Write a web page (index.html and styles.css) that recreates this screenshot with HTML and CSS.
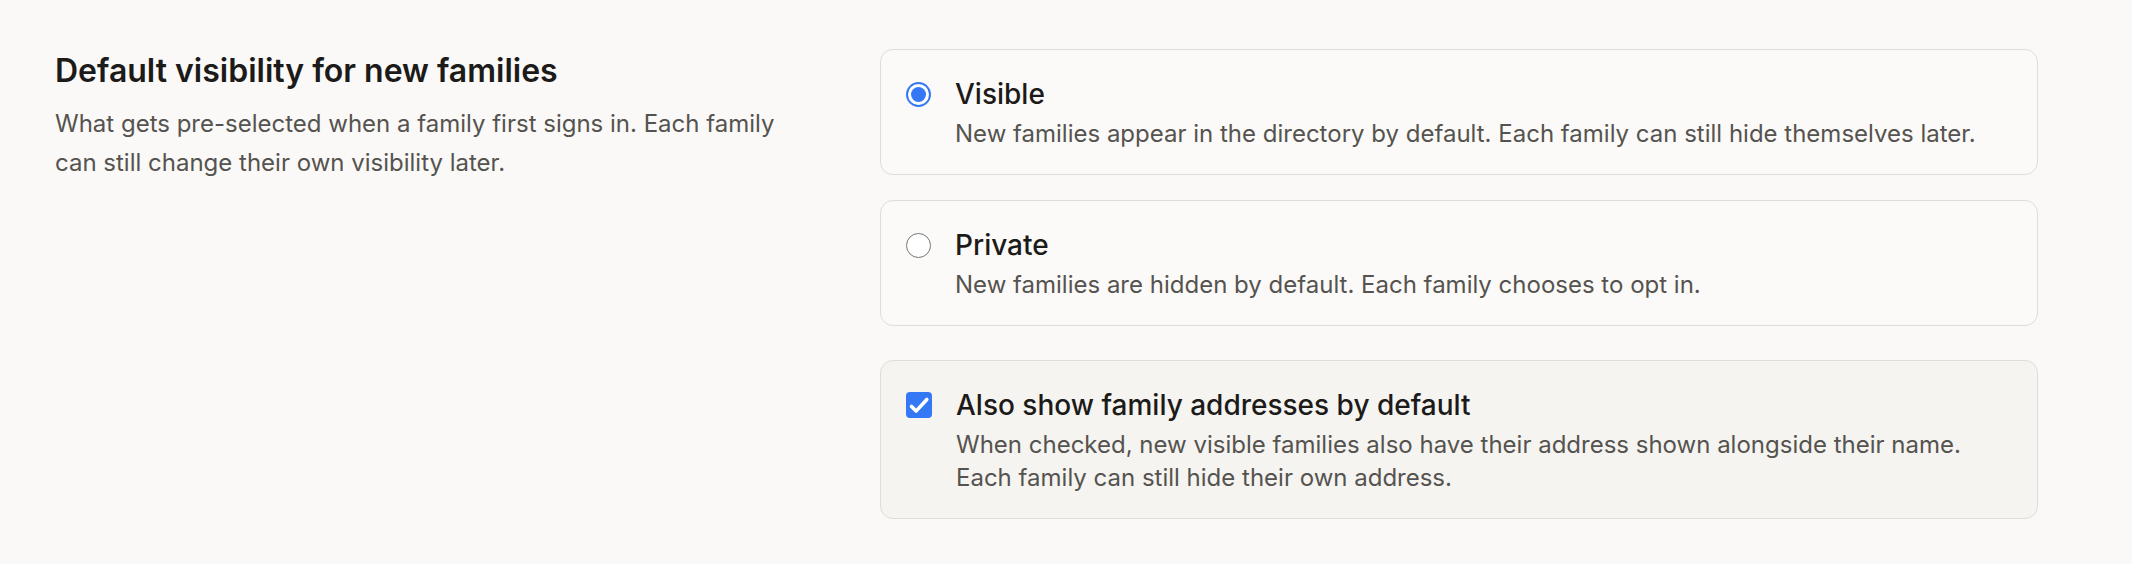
FILE: index.html
```html
<!DOCTYPE html>
<html lang="en">
<head>
<meta charset="utf-8">
<title>Directory settings</title>
<link rel="stylesheet" href="styles.css">
</head>
<body>
<section class="setting">
  <div class="setting-info">
    <h2 class="setting-title">Default visibility for new families</h2>
    <p class="setting-desc">What gets pre-selected when a family first signs in. Each family can still change their own visibility later.</p>
  </div>
  <div class="setting-controls">
    <div class="option-group">
      <label class="option">
        <span class="radio radio-checked"><span class="radio-dot"></span></span>
        <span class="option-text">
          <span class="option-label">Visible</span>
          <span class="option-hint">New families appear in the directory by default. Each family can still hide themselves later.</span>
        </span>
      </label>
      <label class="option">
        <span class="radio"></span>
        <span class="option-text">
          <span class="option-label">Private</span>
          <span class="option-hint">New families are hidden by default. Each family chooses to opt in.</span>
        </span>
      </label>
    </div>
    <label class="option option-muted">
      <span class="checkbox">
        <svg viewBox="0 0 26 26" width="26" height="26" aria-hidden="true"><path d="M5.5 14.5l4.6 4.6L20.8 7.5" fill="none" stroke="#fff" stroke-width="3.6" stroke-linecap="round" stroke-linejoin="round"/></svg>
      </span>
      <span class="option-text">
        <span class="option-label">Also show family addresses by default</span>
        <span class="option-hint">When checked, new visible families also have their address shown alongside their name.<br>Each family can still hide their own address.</span>
      </span>
    </label>
  </div>
</section>
</body>
</html>
```

FILE: styles.css
```css
* {
  box-sizing: border-box;
}

html, body {
  margin: 0;
  background: #faf9f7;
}

body {
  font-family: Inter, "Noto Sans", "Liberation Sans", sans-serif;
  color: #1c1b19;
}

.setting {
  display: grid;
  grid-template-columns: 745px 1158px;
  column-gap: 80px;
  padding: 49px 0 0 55px;
}

.setting-title {
  margin: 0;
  font-size: 32px;
  line-height: 44px;
  font-weight: 600;
  color: #1c1b19;
}

.setting-desc {
  margin: 11px 0 0;
  font-size: 24px;
  line-height: 39px;
  color: #55534f;
}

.setting-controls {
  display: flex;
  flex-direction: column;
  gap: 34px;
}

.option-group {
  display: flex;
  flex-direction: column;
  gap: 25px;
}

.option {
  display: flex;
  align-items: flex-start;
  gap: 24px;
  padding: 24.5px 24px 24.5px 25px;
  border: 1px solid #dfddd5;
  border-radius: 13px;
  background: #fbfaf8;
}

.option-muted {
  background: #f5f4f1;
}

.radio {
  flex: none;
  width: 25px;
  height: 25px;
  margin-top: 7px;
  border-radius: 50%;
  border: 1.5px solid #767676;
  background: #fff;
  display: flex;
  align-items: center;
  justify-content: center;
}

.radio-checked {
  border: 2.5px solid #3478f6;
}

.radio-dot {
  width: 15px;
  height: 15px;
  border-radius: 50%;
  background: #3478f6;
}

.checkbox {
  flex: none;
  width: 26px;
  height: 26px;
  margin-top: 6px;
  border-radius: 4px;
  background: #3478f6;
  display: flex;
}

.option-text {
  display: flex;
  flex-direction: column;
  gap: 3px;
}

.option-label {
  font-size: 28px;
  line-height: 39px;
  font-weight: 500;
  color: #1c1b19;
}

.option-hint {
  font-size: 24px;
  line-height: 33px;
  color: #55534f;
}
```
